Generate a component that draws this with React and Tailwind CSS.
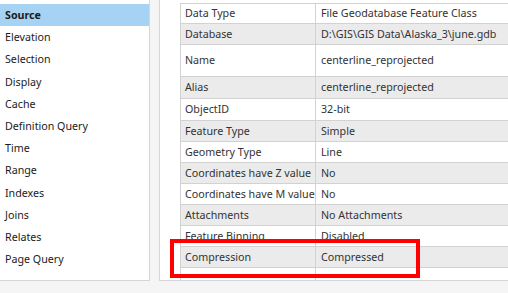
export default function App() {
  const nav = [
    "Source",
    "Elevation",
    "Selection",
    "Display",
    "Cache",
    "Definition Query",
    "Time",
    "Range",
    "Indexes",
    "Joins",
    "Relates",
    "Page Query",
  ];
  const rows = [
    ["Data Type", "File Geodatabase Feature Class", 20],
    ["Database", "D:\\GIS\\GIS Data\\Alaska_3\\june.gdb", 21],
    ["Name", "centerline_reprojected", 32],
    ["Alias", "centerline_reprojected", 22],
    ["ObjectID", "32-bit", 22],
    ["Feature Type", "Simple", 21],
    ["Geometry Type", "Line", 21],
    ["Coordinates have Z value", "No", 21],
    ["Coordinates have M value", "No", 21],
    ["Attachments", "No Attachments", 21],
    ["Feature Binning", "Disabled", 21],
    ["Compression", "Compressed", 21],
    ["", "", 21],
  ];
  return (
    <div
      className="relative w-[508px] h-[293px] bg-[#f4f5f4] flex overflow-hidden text-[10.7px]"
      style={{ fontFamily: '"Noto Sans", "Open Sans", sans-serif' }}
    >
      <div className="w-[150px] h-[281px] bg-white border-r border-b border-[#d6d6d6] pt-[4px] flex flex-col text-[#1b1b1b]">
        {nav.map((n, i) => (
          <div
            key={n}
            className={
              "h-[22.2px] shrink-0 flex items-center pl-[5px] " +
              (i === 0 ? "bg-[#a6d3f4] font-bold" : "")
            }
          >
            {n}
          </div>
        ))}
      </div>
      <div className="ml-[9px] flex-1 h-[281px] bg-white border-l border-b border-[#d6d6d6] pl-[20px] pt-[3px] overflow-hidden">
        <div className="w-[400px] border-l border-t border-[#d2d2d2] text-[#333333]">
          {rows.map(([k, v, h], i) => (
            <div
              key={i}
              className={
                "flex border-b border-[#d2d2d2] box-border " +
                (i % 2 === 1 ? "bg-[#ebebeb]" : "bg-white")
              }
              style={{ height: h }}
            >
              <div className="w-[135px] shrink-0 border-r border-[#d2d2d2] flex items-center pl-[4px] whitespace-nowrap">
                {k}
              </div>
              <div className="flex-1 flex items-center pl-[5px] whitespace-nowrap">
                {v}
              </div>
            </div>
          ))}
        </div>
      </div>
      <div className="absolute left-[170px] top-[239px] w-[250px] h-[39px] border-[4px] border-[#ff0000]" />
    </div>
  );
}
